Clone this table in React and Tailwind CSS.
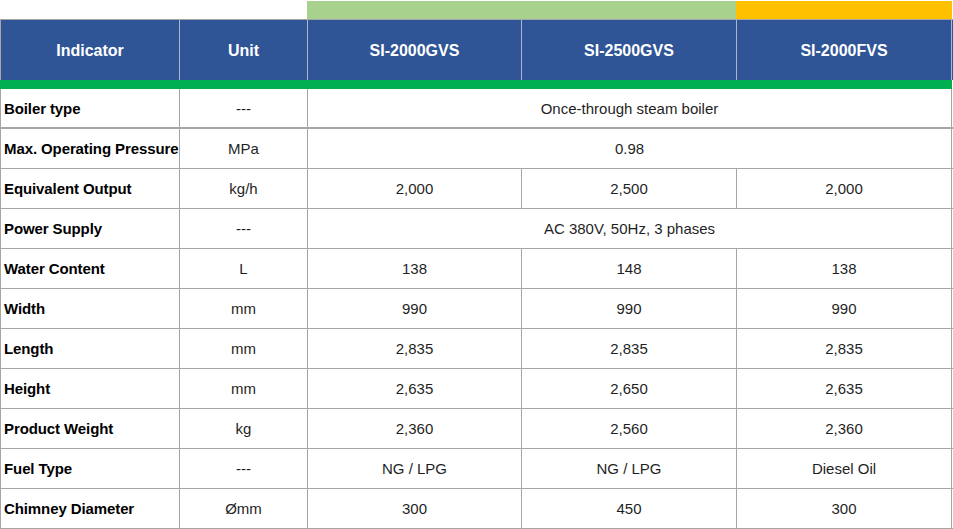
const cols = 'grid grid-cols-[179px_128px_214px_215px_216px]';

const rows = [
  { label: 'Boiler type', unit: '---', merged: 'Once-through steam boiler', thick: true },
  { label: 'Max. Operating Pressure', unit: 'MPa', merged: '0.98' },
  { label: 'Equivalent Output', unit: 'kg/h', values: ['2,000', '2,500', '2,000'] },
  { label: 'Power Supply', unit: '---', merged: 'AC 380V, 50Hz, 3 phases' },
  { label: 'Water Content', unit: 'L', values: ['138', '148', '138'] },
  { label: 'Width', unit: 'mm', values: ['990', '990', '990'] },
  { label: 'Length', unit: 'mm', values: ['2,835', '2,835', '2,835'] },
  { label: 'Height', unit: 'mm', values: ['2,635', '2,650', '2,635'] },
  { label: 'Product Weight', unit: 'kg', values: ['2,360', '2,560', '2,360'] },
  { label: 'Fuel Type', unit: '---', values: ['NG / LPG', 'NG / LPG', 'Diesel Oil'] },
  { label: 'Chimney Diameter', unit: 'Ømm', values: ['300', '450', '300'] },
];

const cell = 'flex items-center justify-center pt-[2px] border-l border-[#a6a6a6]';

export default function App() {
  return (
    <div className="w-[953px] h-[529px] bg-white font-['Liberation_Sans',Arial,sans-serif] text-[15px] text-[#1f1f1f]">
      <div className={`${cols} h-[19px] pt-px`}>
        <div className="col-span-2" />
        <div className="col-span-2 bg-[#a9d18e]" />
        <div className="bg-[#ffc000]" />
      </div>

      <div className={`${cols} h-[61px] bg-[#2f5597] border-t border-[#a6a6a6] text-white font-bold text-[16px]`}>
        <div className="flex items-center justify-center pt-[2px] border-l border-[#a6a6a6]">Indicator</div>
        <div className="flex items-center justify-center pt-[2px] border-l border-[#aab6cc]">Unit</div>
        <div className="flex items-center justify-center pt-[2px] border-l border-[#aab6cc]">SI-2000GVS</div>
        <div className="flex items-center justify-center pt-[2px] border-l border-[#aab6cc]">SI-2500GVS</div>
        <div className="flex items-center justify-center pt-[2px] border-l border-r border-[#aab6cc]">SI-2000FVS</div>
      </div>

      <div className="w-[952px] h-[9px] bg-[#00b050]" />

      {rows.map((r) => (
        <div
          key={r.label}
          className={`${cols} ${r.thick ? 'h-[40px] border-b-2' : 'h-[40px] border-b'} border-[#a6a6a6]`}
        >
          <div className="flex items-center pt-[2px] pl-[3px] border-l border-[#a6a6a6] font-bold text-black whitespace-nowrap tracking-[-0.1px]">
            {r.label}
          </div>
          <div className={cell}>{r.unit}</div>
          {r.merged ? (
            <div className={`${cell} col-span-3 border-r`}>{r.merged}</div>
          ) : (
            r.values.map((v, i) => (
              <div key={i} className={`${cell} ${i === 2 ? 'border-r' : ''}`}>{v}</div>
            ))
          )}
        </div>
      ))}
    </div>
  );
}
